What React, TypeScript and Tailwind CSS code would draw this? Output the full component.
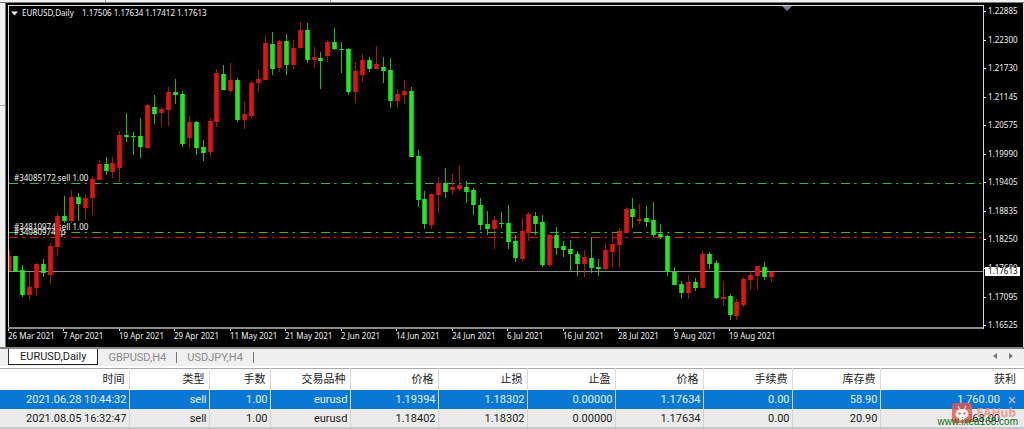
import { useState } from 'react'

// [direction, high, body top, body bottom, low] as y positions on the chart
type Candle = [string, number, number, number, number]

const candles: Candle[] = [
  ['r', 250, 256, 271, 271], ['g', 256, 256, 272, 272], ['g', 265, 270, 295, 297], ['r', 272, 287, 295, 300],
  ['r', 263, 264, 288, 296], ['g', 259, 264, 273, 277], ['r', 243, 246, 275, 284], ['r', 213, 216, 247, 256],
  ['g', 196, 216, 221, 223], ['r', 190, 197, 221, 223], ['g', 193, 197, 204, 221], ['r', 194, 198, 208, 219],
  ['r', 176, 179, 198, 215], ['r', 160, 164, 180, 180], ['g', 157, 164, 171, 175], ['r', 157, 163, 172, 178],
  ['r', 131, 135, 168, 182], ['g', 113, 135, 137, 142], ['g', 132, 136, 137, 155], ['g', 118, 136, 147, 158],
  ['r', 104, 105, 148, 148], ['g', 95, 107, 114, 124], ['r', 107, 109, 113, 127], ['r', 87, 92, 110, 126],
  ['g', 79, 92, 95, 104], ['g', 91, 94, 144, 147], ['r', 116, 122, 138, 148], ['g', 121, 122, 148, 155],
  ['g', 140, 147, 153, 161], ['r', 118, 121, 152, 157], ['r', 69, 73, 122, 127], ['g', 65, 74, 90, 90],
  ['r', 63, 80, 91, 94], ['g', 78, 80, 120, 122], ['r', 101, 114, 120, 129], ['r', 81, 83, 116, 119],
  ['r', 70, 79, 83, 92], ['r', 36, 43, 80, 80], ['g', 32, 44, 69, 75], ['r', 40, 41, 68, 72],
  ['g', 34, 41, 65, 75], ['r', 40, 48, 65, 69], ['r', 22, 30, 48, 49], ['g', 23, 30, 60, 63],
  ['r', 47, 57, 60, 68], ['g', 52, 58, 61, 89], ['r', 40, 42, 56, 62], ['g', 28, 42, 49, 50],
  ['g', 42, 49, 50, 73], ['g', 48, 49, 92, 95], ['r', 62, 71, 92, 103], ['r', 54, 60, 75, 82],
  ['g', 57, 60, 69, 72], ['r', 46, 64, 69, 69], ['g', 57, 67, 71, 83], ['g', 58, 70, 101, 108],
  ['r', 89, 94, 101, 108], ['r', 80, 91, 95, 104], ['g', 87, 91, 157, 157], ['g', 150, 156, 200, 207],
  ['g', 191, 199, 224, 229], ['r', 193, 194, 225, 229], ['r', 177, 183, 195, 213], ['g', 168, 183, 192, 198],
  ['r', 174, 187, 190, 195], ['r', 165, 185, 189, 191], ['g', 181, 187, 192, 203], ['g', 188, 190, 205, 215],
  ['g', 198, 205, 225, 230], ['g', 211, 224, 229, 235], ['r', 216, 220, 229, 249], ['g', 212, 223, 224, 228],
  ['g', 205, 223, 242, 249], ['g', 235, 241, 258, 262], ['r', 218, 231, 259, 262], ['r', 212, 214, 233, 241],
  ['g', 212, 216, 224, 235], ['g', 215, 222, 265, 267], ['r', 234, 235, 265, 267], ['g', 227, 235, 248, 255],
  ['g', 241, 246, 250, 257], ['g', 240, 249, 254, 272], ['g', 251, 254, 264, 276], ['r', 250, 257, 264, 277],
  ['g', 237, 258, 268, 273], ['g', 259, 267, 269, 276], ['r', 243, 250, 269, 271], ['r', 233, 244, 252, 268],
  ['r', 228, 231, 245, 267], ['r', 207, 209, 233, 233], ['g', 198, 209, 217, 228], ['r', 204, 219, 221, 224],
  ['g', 206, 218, 222, 227], ['g', 202, 220, 235, 237], ['g', 224, 234, 237, 239], ['g', 235, 236, 272, 276],
  ['g', 267, 272, 285, 285], ['g', 281, 284, 293, 298], ['r', 275, 282, 293, 299], ['g', 278, 282, 288, 291],
  ['r', 251, 254, 288, 288], ['g', 252, 254, 264, 269], ['g', 260, 263, 298, 299], ['r', 281, 297, 299, 306],
  ['g', 294, 296, 315, 320], ['r', 299, 302, 316, 320], ['r', 277, 279, 305, 307], ['r', 271, 275, 280, 290],
  ['r', 266, 266, 276, 290], ['g', 262, 267, 277, 280], ['r', 271, 272, 277, 282],
]

const STEP = 6.933

const dates = [
  '26 Mar 2021', '7 Apr 2021', '19 Apr 2021', '29 Apr 2021', '11 May 2021', '21 May 2021', '2 Jun 2021',
  '14 Jun 2021', '24 Jun 2021', '6 Jul 2021', '16 Jul 2021', '28 Jul 2021', '9 Aug 2021', '19 Aug 2021',
]

const prices = [
  '1.22885', '1.22300', '1.21730', '1.21145', '1.20575', '1.19990',
  '1.19405', '1.18835', '1.18250', '1.17680', '1.17095', '1.16525',
]

const columns = [
  { name: '时间', width: 'w-[129px]' },
  { name: '类型', width: 'w-[80px]' },
  { name: '手数', width: 'w-[61px]' },
  { name: '交易品种', width: 'w-[80px]' },
  { name: '价格', width: 'w-[88px]' },
  { name: '止损', width: 'w-[89px]' },
  { name: '止盈', width: 'w-[88px]' },
  { name: '价格', width: 'w-[88px]' },
  { name: '手续费', width: 'w-[89px]' },
  { name: '库存费', width: 'w-[88px]' },
]

const orders = [
  ['2021.06.28 10:44:32', 'sell', '1.00', 'eurusd', '1.19394', '1.18302', '0.00000', '1.17634', '0.00', '58.90', '1 760.00'],
  ['2021.08.05 16:32:47', 'sell', '1.00', 'eurusd', '1.18402', '1.18302', '0.00000', '1.17634', '0.00', '20.90', '768.00'],
]

const tabs = ['EURUSD,Daily', 'GBPUSD,H4', 'USDJPY,H4']

const OrderLine = ({ y, color }: { y: number; color: string }) => (
  <line x1="3" x2="100%" y1={y - 2.5} y2={y - 2.5} stroke={color} strokeDasharray="9 4.3 2.3 5.2" />
)

const Plot = () => (
  <svg className="block h-[344px] w-full" role="img" aria-label="EURUSD,Daily">
    <OrderLine y={183} color="#35b835" />
    <OrderLine y={232} color="#35b835" />
    <OrderLine y={237} color="#e01212" />
    <line x1="3" x2="100%" y1="268.5" y2="268.5" stroke="#8e8e8e" />
    <g transform="translate(-6 -3)" fill="#f0f0f0" fontSize="8">
      <path d="M11 11.5h7l-3.5 4z" />
      <path d="M782 6h10l-5 5z" fill="#75808a" />
      <text x="22" y="16">EURUSD,Daily</text>
      <text x="82" y="16">1.17506 1.17634 1.17412 1.17613</text>
      <text x="14" y="181">#34085172 sell 1.00</text>
      <text x="14" y="230">#34810974 sell 1.00</text>
      <text x="14" y="235">#34080974 tp</text>
      {candles.map(([dir, high, top, bottom, low], i) => {
        const x = Math.round(8.5 + i * STEP)
        const color = dir === 'r' ? '#e01212' : '#1ee81e'
        return (
          <g key={i} fill={color}>
            <rect x={x} y={high} width="1" height={low - high} opacity="0.8" />
            <rect x={i === 0 ? x : x - 1.8} y={top} width={i === 0 ? 2.5 : 4.6} height={bottom - top} />
          </g>
        )
      })}
      {dates.map((date, i) => (
        <g key={date}>
          <rect x={Math.round(8 + i * STEP * 8)} y="328" width="1" height="3" />
          <text x={Math.round(8 + i * STEP * 8)} y="339">{date}</text>
        </g>
      ))}
    </g>
    <rect x="2" y="2" width="1" height="323" fill="#d8d8d8" />
    <rect x="2" y="2" width="100%" height="1" fill="#d8d8d8" />
    <rect x="2" y="324" width="100%" height="2" fill="#8a8a8a" />
  </svg>
)

const PriceAxis = () => (
  <svg className="block h-[344px] w-[40px] shrink-0" fill="#f0f0f0" fontSize="8">
    <rect x="0" y="2" width="1" height="324" fill="#d8d8d8" />
    {prices.map((price, i) => (
      <g key={price}>
        <rect x="1" y={Math.round(8 + i * 28.55)} width="2" height="1" />
        <text x="5" y={Math.round(11 + i * 28.55)}>{price}</text>
      </g>
    ))}
    <rect x="2" y="264" width="35" height="9" fill="#fff" />
    <text x="5" y="271" fill="#000">1.17613</text>
  </svg>
)

const Watermark = () => (
  <div className="pointer-events-none absolute bottom-0 right-[6px] h-[26px] w-[84px]">
    <div className="absolute right-[2px] top-0 flex items-center gap-[4px] opacity-80">
      <svg className="h-[20px] w-[20px]" viewBox="0 0 20 20">
        <rect width="20" height="20" rx="3" fill="#f0524b" />
        <path d="M6 3l2 4M14 3l-2 4" stroke="#fff" strokeWidth="1.2" />
        <ellipse cx="10" cy="11" rx="6.5" ry="5" fill="#fff" />
        <circle cx="7.5" cy="10.5" r="1.3" fill="#f0524b" />
        <circle cx="12.5" cy="10.5" r="1.3" fill="#f0524b" />
        <path d="M7 16.5h6" stroke="#fff" strokeWidth="1.5" />
      </svg>
      <span className="text-[12px] leading-[20px] font-bold text-[#f08a80]">EAHub</span>
    </div>
    <span className="absolute bottom-0 right-0 font-['Liberation_Sans'] text-[10px] leading-[14px] text-[#0b6b0b]">
      www.ixea168.com
    </span>
  </div>
)

export default function App() {
  const [active, setActive] = useState(0)
  const [selected, setSelected] = useState(0)

  return (
    <main className="relative overflow-hidden bg-[#f0f0f0] font-['Noto_Sans','Noto_Sans_CJK_SC',sans-serif]">
      <div className="flex h-[3px] items-start border-b border-[#777]">
        <div className="ml-[105px] h-[2px] w-[226px] border-x border-[#999]" />
      </div>

      <div className="flex border-r border-[#ddd]">
        <div className="flex w-[6px] shrink-0 flex-col border-r border-[#777]">
          <div className="h-[103px] border-b border-[#aaa]" />
        </div>
        <div className="flex min-w-0 flex-1 bg-black">
          <div className="min-w-0 flex-1">
            <Plot />
          </div>
          <PriceAxis />
        </div>
      </div>

      <div className="flex h-[21px] items-start border-t-2 border-b-2 border-t-[#858585] border-b-white font-['Roboto',sans-serif]">
        <div className="h-[16px] w-[9px] shrink-0 border-r border-[#333]" />
        {tabs.map((tab, i) => (
          <div key={tab} className="flex items-center">
            <button
              onClick={() => setActive(i)}
              className={
                i === active
                  ? 'h-[16px] border-b border-r border-[#222] bg-white px-[11px] text-[11px] leading-[15px] text-[#222]'
                  : 'h-[16px] px-[10px] text-[11px] leading-[15px] text-[#8a8a8a]'
              }
            >
              {tab}
            </button>
            {i !== active && <div className="h-[11px] border-l border-[#777]" />}
          </div>
        ))}
        <div className="ml-auto flex pr-[5px] text-[#777]">
          <button aria-label="Scroll left" className="flex h-[14px] w-[16px] items-center justify-center">
            <svg className="h-[6px] w-[4px]" viewBox="0 0 4 6"><path d="M4 0v6L0 3z" fill="currentColor" /></svg>
          </button>
          <button aria-label="Scroll right" className="flex h-[14px] w-[16px] items-center justify-center">
            <svg className="h-[6px] w-[4px]" viewBox="0 0 4 6"><path d="M0 0v6l4-3z" fill="currentColor" /></svg>
          </button>
        </div>
      </div>

      <table className="w-full table-fixed border-collapse border-t border-[#aaa] text-right font-['Roboto','Noto_Sans_CJK_SC',sans-serif] text-[11px] whitespace-nowrap">
        <thead>
          <tr className="h-[21px] bg-white text-[#222]">
            {columns.map((col, i) => (
              <th key={i} className={`${col.width} border-r border-[#ddd] p-0 pt-[2px] pr-[4px] leading-[18px] font-normal`}>
                {col.name}
              </th>
            ))}
            <th className="p-0 pt-[2px] pr-[8px] leading-[18px] font-normal">获利</th>
          </tr>
        </thead>
        <tbody>
          {orders.map((order, row) => (
            <tr
              key={order[0]}
              onClick={() => setSelected(row)}
              className={row === selected ? 'h-[19px] bg-[#0878d4] text-[#e4f2ff]' : 'h-[18px] bg-[#ebebeb] text-[#222]'}
            >
              {order.slice(0, 10).map((value, i) => (
                <td key={i} className="border-r border-[#d4d4d4] p-0 pt-[2px] pr-[2px] leading-[16px]">{value}</td>
              ))}
              <td className="p-0 pt-[2px] pr-[8px] leading-[16px]">
                <div className="flex items-center justify-end gap-[8px]">
                  {order[10]}
                  <button aria-label="Close order" className="flex h-[8px] w-[8px]">
                    {row === selected && (
                      <svg viewBox="0 0 8 8"><path d="M1 1l6 6M7 1L1 7" stroke="#a9b8c6" strokeWidth="1.6" /></svg>
                    )}
                  </button>
                </div>
              </td>
            </tr>
          ))}
        </tbody>
      </table>
      <div className="h-[2px] bg-[#c8c8c8]" />
      <Watermark />
    </main>
  )
}
